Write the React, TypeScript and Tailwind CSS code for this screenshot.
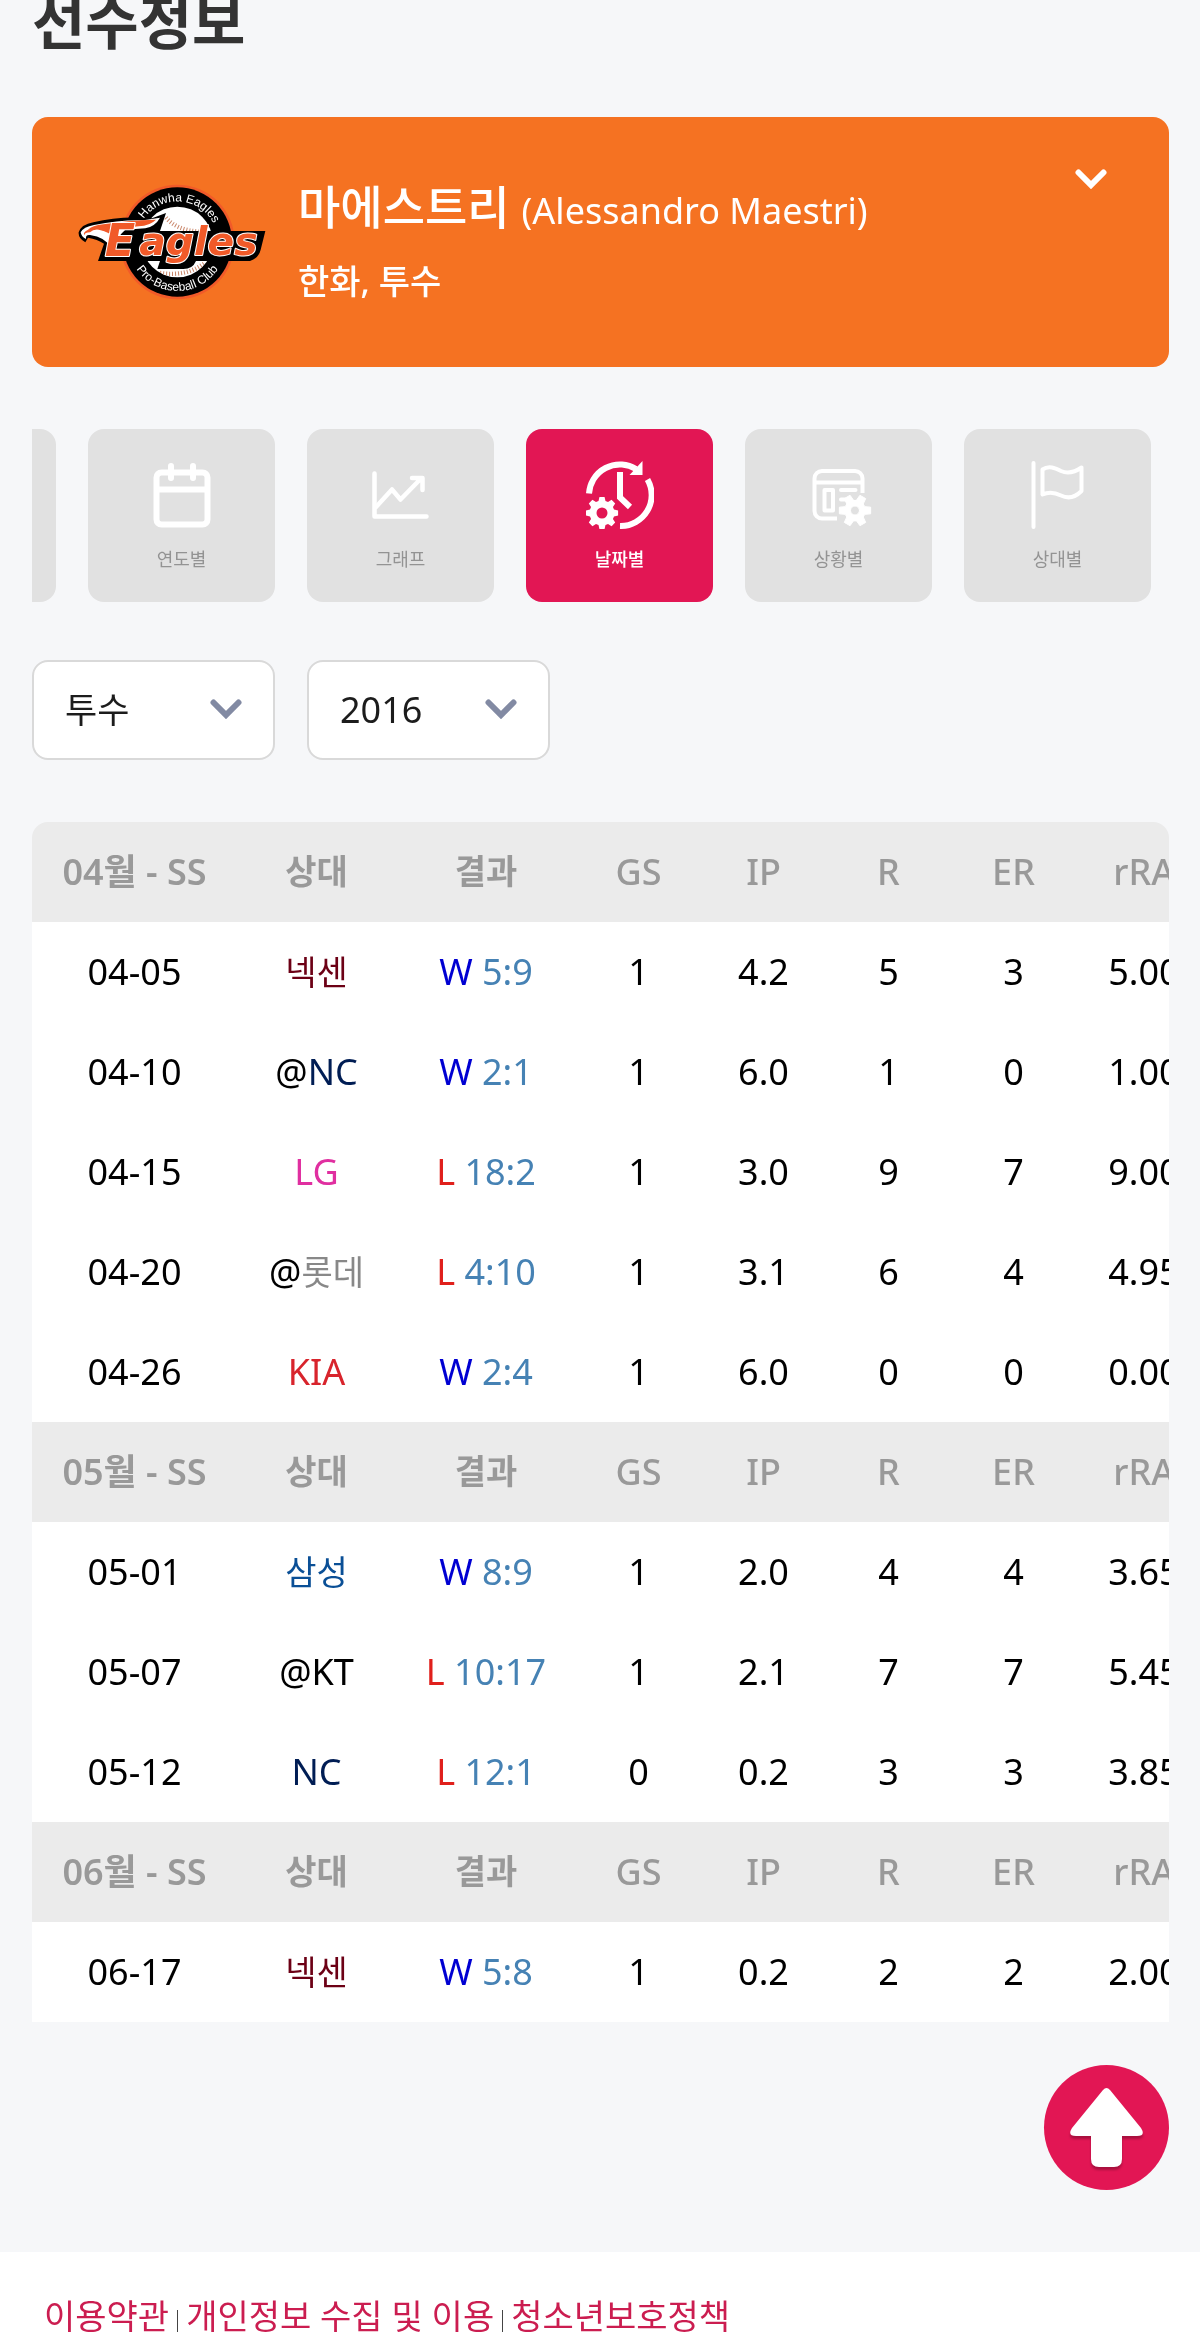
import { useState } from "react";
import type { ReactNode } from "react";
import clsx from "clsx";

type Game = { date: string; away?: boolean; team: string; result: "W" | "L"; score: string; stats: string[] };
type Month = { label: string; games: Game[] };

const MONTHS: Month[] = [
  {
    label: "04월 - SS",
    games: [
      { date: "04-05", team: "넥센", result: "W", score: "5:9", stats: ["1", "4.2", "5", "3", "5.00"] },
      { date: "04-10", away: true, team: "NC", result: "W", score: "2:1", stats: ["1", "6.0", "1", "0", "1.00"] },
      { date: "04-15", team: "LG", result: "L", score: "18:2", stats: ["1", "3.0", "9", "7", "9.00"] },
      { date: "04-20", away: true, team: "롯데", result: "L", score: "4:10", stats: ["1", "3.1", "6", "4", "4.95"] },
      { date: "04-26", team: "KIA", result: "W", score: "2:4", stats: ["1", "6.0", "0", "0", "0.00"] },
    ],
  },
  {
    label: "05월 - SS",
    games: [
      { date: "05-01", team: "삼성", result: "W", score: "8:9", stats: ["1", "2.0", "4", "4", "3.65"] },
      { date: "05-07", away: true, team: "KT", result: "L", score: "10:17", stats: ["1", "2.1", "7", "7", "5.45"] },
      { date: "05-12", team: "NC", result: "L", score: "12:1", stats: ["0", "0.2", "3", "3", "3.85"] },
    ],
  },
  {
    label: "06월 - SS",
    games: [{ date: "06-17", team: "넥센", result: "W", score: "5:8", stats: ["1", "0.2", "2", "2", "2.00"] }],
  },
];

const STAT_HEADERS = ["GS", "IP", "R", "ER", "rRA"];

const TEAM_STYLES: Record<string, string> = {
  넥센: "text-[#6c0015] text-[34px]",
  롯데: "text-[#888888] text-[34px]",
  삼성: "text-[#0a4f96] text-[34px]",
  NC: "text-[#001d54]",
  LG: "text-[#e02fa0]",
  KIA: "text-[#d8242c]",
  KT: "text-black",
};

// Regular gear outline with `teeth` teeth around (cx, cy)
function gearPath(cx: number, cy: number, outer: number, inner: number, teeth: number) {
  const step = (Math.PI * 2) / teeth;
  const pts: string[] = [];
  for (let i = 0; i < teeth; i++) {
    const a = (i + (teeth === 6 ? 0.5 : 0)) * step - Math.PI / 2;
    [[-0.36, inner], [-0.2, outer], [0.2, outer], [0.36, inner]].forEach(([t, r]) => {
      pts.push(`${(cx + r * Math.cos(a + t * step)).toFixed(2)} ${(cy + r * Math.sin(a + t * step)).toFixed(2)}`);
    });
  }
  return `M${pts.join("L")}Z`;
}

function Icon({ children }: { children: ReactNode }) {
  return (
    <svg viewBox="0 0 68 68" className="h-[68px] w-[68px]" fill="none" stroke="white" strokeLinecap="round" strokeLinejoin="round" aria-hidden="true">
      {children}
    </svg>
  );
}

function CalendarIcon() {
  return (
    <Icon>
      <rect x="8.5" y="11.5" width="51" height="52" rx="5" strokeWidth="6" />
      <path d="M23 5v12M45 5v12M9 28.500h50" strokeWidth="6" />
    </Icon>
  );
}

function ChartIcon() {
  return (
    <Icon>
      <path d="M7.500 12.500v43h52" strokeWidth="4.500" />
      <path d="M9 46 25 28.500 33.500 38.500 54 17.500M45 17h10.500v12" strokeWidth="4.500" />
    </Icon>
  );
}

function ClockIcon() {
  return (
    <Icon>
      <g strokeWidth="6" strokeLinecap="butt" strokeLinejoin="miter">
        <path d="M3 32.500A31 31 0 0 1 50 8" />
        <path d="M61.500 18.500A31 31 0 0 1 34 65" />
        <path d="M34 11v25.500L44 46" />
      </g>
      <path d="M56.500 0v14H43.500Z" fill="white" stroke="none" />
      <path d={gearPath(16, 52, 16.3, 12.5, 8) + "M21.500 52a5.500 5.500 0 1 0-11 0a5.500 5.500 0 1 0 11 0Z"} fill="white" fillRule="evenodd" stroke="none" />
    </Icon>
  );
}

function LayoutIcon() {
  return (
    <Icon>
      <path d="M32 57.500H17a7.500 7.500 0 0 1-7.500-7.500V17.500a7.500 7.500 0 0 1 7.500-7.500H50a7.500 7.500 0 0 1 7.500 7.500V32M10 21.500h47" strokeWidth="4" strokeLinecap="butt" />
      <path d="M19.500 29h8.500v20.500h-8.500ZM36 29h14.500M36 38.500h4" strokeWidth="4" />
      <path d={gearPath(50, 49.5, 16, 10.5, 6) + "M54.500 49.500a4.500 4.500 0 1 0-9 0a4.500 4.500 0 1 0 9 0Z"} fill="white" fillRule="evenodd" strokeWidth="1" />
    </Icon>
  );
}

function FlagIcon() {
  return (
    <Icon>
      <path d="M9.500 2v64" strokeWidth="4" />
      <path d="M18.500 8.500C25 4 31 7 37 10C44 13 51 11 57.500 6.500V30C51 36.500 44 38 37 34.500C31 31.500 25 30.500 18.500 33.500Z" strokeWidth="4" />
    </Icon>
  );
}

function Chevron({ className }: { className?: string }) {
  return (
    <svg viewBox="0 0 32 20" className={clsx("h-5 w-8", className)} fill="none" stroke="currentColor" strokeWidth="6" strokeLinecap="round" aria-hidden="true">
      <path d="M3.500 3.500 16 16 28.500 3.500" />
    </svg>
  );
}

function TeamLogo() {
  return (
    <svg viewBox="54 36 564 357" className="h-[119px] w-[188px] shrink-0" role="img" aria-label="Hanwha Eagles">
      <defs>
        <path id="arc-top" d="M230 213A122 122 0 0 1 474 213" />
        <path id="arc-bottom" d="M205 213A147 147 0 0 0 499 213" />
        <clipPath id="ball"><circle cx="352" cy="213" r="106" /></clipPath>
      </defs>
      <circle cx="352" cy="213" r="172" fill="#f15a29" />
      <circle cx="352" cy="213" r="164" fill="black" />
      <circle cx="352" cy="213" r="106" fill="white" />
      <g clipPath="url(#ball)" fill="none" stroke="#c9866a">
        <path d="M318 140Q350 178 420 182" strokeWidth="13" strokeDasharray="3 6" />
        <path d="M300 306Q380 318 436 275" strokeWidth="13" strokeDasharray="3 6" />
      </g>
      <g fill="white" fontSize="36" className="font-['Liberation_Sans',sans-serif]">
        <text textAnchor="middle"><textPath href="#arc-top" startOffset="52%">Hanwha Eagles</textPath></text>
        <text textAnchor="middle"><textPath href="#arc-bottom" startOffset="50%">Pro-Baseball Club</textPath></text>
      </g>
      {/* black backing behind the wordmark and the eagle's head */}
      <path d="M56 184Q64 160 100 154Q180 134 276 142L318 126L300 180H616L602 236Q596 262 570 270H408Q398 294 370 294H292L300 270H114L132 218Q112 204 84 200L76 214Q54 202 56 184Z" fill="black" />
      <path d="M62 184Q70 168 102 162Q180 146 250 148L300 140Q286 166 256 172L196 176Q168 200 160 236Q134 196 90 192Q76 190 78 204Q64 198 62 184Z" fill="white" />
      <path d="M84 176Q96 164 130 160Q200 148 288 146Q270 164 236 166L176 172Q168 186 166 206Q152 182 116 176Q100 174 90 184Q74 184 74 192Q66 186 84 176Z" fill="#f15a29" />
      <path d="M102 180Q132 180 146 214Q146 194 138 186Q124 176 102 180Z" fill="white" />
      <g fill="#f15a29" stroke="white" strokeWidth="6" strokeLinejoin="round" paintOrder="stroke" className="font-['DejaVu_Sans',sans-serif] font-bold italic">
        <text x="134" y="254" fontSize="134">E</text>
        <text x="238" y="252" fontSize="118">agles</text>
      </g>
    </svg>
  );
}

const TABS = [
  { label: "연도별", icon: <CalendarIcon /> },
  { label: "그래프", icon: <ChartIcon /> },
  { label: "날짜별", icon: <ClockIcon /> },
  { label: "상황별", icon: <LayoutIcon /> },
  { label: "상대별", icon: <FlagIcon /> },
];

function TabBar() {
  const [active, setActive] = useState("날짜별");

  return (
    <nav className="mt-[62px] flex gap-8 overflow-x-auto [scrollbar-width:none]">
      <div className="-ml-[163px] w-[187px] shrink-0 rounded-2xl bg-[#e1e1e1]" />
      {TABS.map((tab) => (
        <button key={tab.label} onClick={() => setActive(tab.label)}
          className={clsx("flex h-[173px] w-[187px] shrink-0 flex-col items-center gap-4 rounded-2xl pt-8 text-lg",
            tab.label === active ? "bg-[#e21654] font-medium text-white" : "bg-[#e1e1e1] text-[#939393]")}>
          {tab.icon}
          {tab.label}
        </button>
      ))}
    </nav>
  );
}

function Filter({ label, options, className }: { label: string; options: string[]; className?: string }) {
  return (
    <label className="relative w-[243px]">
      <select aria-label={label} className={clsx("h-[100px] w-full appearance-none rounded-2xl border-2 border-[#d9d9d9] bg-white pl-[31px] text-[#1c1c1c]", className)}>
        {options.map((o) => <option key={o}>{o}</option>)}
      </select>
      <Chevron className="pointer-events-none absolute top-[39px] right-[33px] text-[#828aa3]" />
    </label>
  );
}

function GameTable() {
  return (
    <div className="mt-[62px] overflow-x-auto rounded-t-2xl bg-white [scrollbar-width:none]">
      <table className="w-[1180px] min-w-full table-fixed text-center text-4xl text-black">
        <colgroup>
          <col className="w-[205px]" />
          <col className="w-[159px]" />
          <col className="w-[180px]" />
          <col className="w-[125px]" />
          <col className="w-[125px]" />
          <col className="w-[125px]" />
          <col className="w-[125px]" />
          <col className="w-[136px]" />
        </colgroup>
        {MONTHS.map((month) => (
          <tbody key={month.label}>
            <tr className="h-[100px] bg-[#ebebeb] text-[#999999]">
              <th className="font-semibold">{month.label}</th>
              <th className="text-[34px] font-semibold">상대</th>
              <th className="text-[34px] font-semibold">결과</th>
              {STAT_HEADERS.map((h) => <th key={h} className="font-medium">{h}</th>)}
            </tr>
            {month.games.map((game) => (
              <tr key={game.date} className="h-[100px]">
                <td>{game.date}</td>
                <td>{game.away && "@"}<span className={TEAM_STYLES[game.team]}>{game.team}</span></td>
                <td className="text-[#4682b4]">
                  <span className={game.result === "W" ? "text-[#0000d2]" : "text-[#e0201c]"}>{game.result}</span> {game.score}
                </td>
                {game.stats.map((s, i) => <td key={i}>{s}</td>)}
              </tr>
            ))}
          </tbody>
        ))}
      </table>
    </div>
  );
}

export default function App() {
  return (
    <div className="overflow-hidden bg-[#f6f7f9] font-['Noto_Sans','Noto_Sans_CJK_KR',sans-serif]">
      <main className="pr-[31px] pb-[62px] pl-8">
        <h1 className="-mt-1.5 text-[58px] leading-[56px] font-bold text-[#333333]">선수정보</h1>

        <section className="mt-[67px] flex h-[250px] items-center rounded-2xl bg-[#f57222] pl-[46px] text-white">
          <TeamLogo />
          <div className="ml-8 flex-1">
            <h2 className="text-[46px] leading-[78px] font-medium">
              마에스트리 <span className="text-4xl font-normal">(Alessandro Maestri)</span>
            </h2>
            <p className="text-[34px] leading-[72px] font-medium">한화, 투수</p>
          </div>
          <button aria-label="선수 선택" className="mt-[52px] mr-[62px] self-start">
            <Chevron />
          </button>
        </section>

        <TabBar />

        <div className="mt-[58px] flex gap-8">
          <Filter label="포지션" options={["투수"]} className="text-[35px]" />
          <Filter label="연도" options={["2016"]} className="text-4xl" />
        </div>

        <GameTable />

        <div className="mt-[43px] flex justify-end">
          <button aria-label="맨 위로" className="h-[125px] w-[125px] rounded-full bg-[#e21654]">
            <svg viewBox="0 0 125 125" className="h-full w-full drop-shadow-[0_3px_1px_rgba(0,0,0,0.25)]" fill="white" aria-hidden="true">
              <path d="M59 25Q62.500 21 66 25L97 63Q102 71 93 71H78V94Q78 102 70 102H55Q47 102 47 94V71H32Q23 71 28 63Z" />
            </svg>
          </button>
        </div>
      </main>

      <footer className="flex h-20 items-start bg-white px-11 pt-10 text-[34px] leading-[48px] text-[#cb1d50]">
        <a href="#terms">이용약관</a>
        <span className="mx-2 mt-[18px] h-6 w-px bg-[#444444]" />
        <a href="#privacy">개인정보 수집 및 이용</a>
        <span className="mx-2 mt-[18px] h-6 w-px bg-[#444444]" />
        <a href="#youth">청소년보호정책</a>
      </footer>
    </div>
  );
}
